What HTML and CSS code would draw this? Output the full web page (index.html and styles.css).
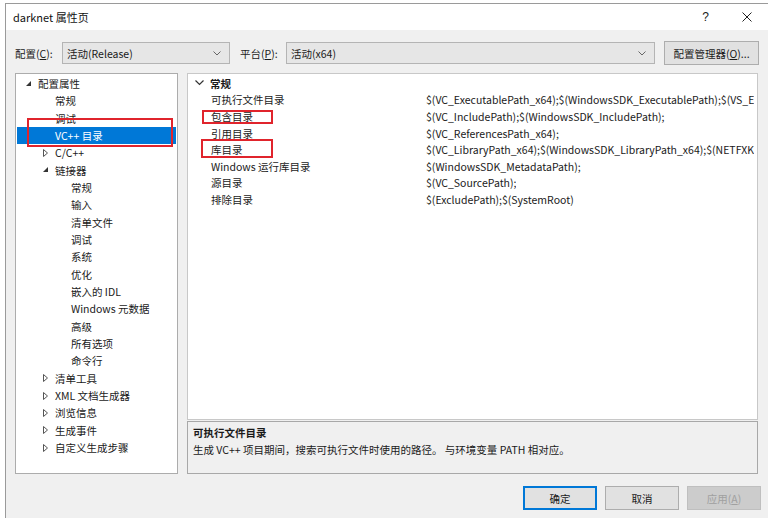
FILE: index.html
```html
<!DOCTYPE HTML>
<html>

<head>
    <title>darknet 属性页</title>
    <meta name="viewport" content="width=device-width, initial-scale=1">
    <link rel="stylesheet" href="styles.css">
</head>

<body>
    <div class="dialog">
        <div class="titlebar">
            <span class="title">darknet 属性页</span>
            <span class="help">?</span>
            <svg class="close" width="10" height="10" viewBox="0 0 10 10">
                <path d="M0.5 0.5 L9.5 9.5 M9.5 0.5 L0.5 9.5" stroke="#222" stroke-width="1" fill="none" />
            </svg>
        </div>

        <div class="toolbar">
            <span class="lbl">配置(<u>C</u>):</span>
            <div class="combo combo-config">
                <span>活动(Release)</span>
                <svg width="8" height="5" viewBox="0 0 8 5"><path d="M0.5 0.5 L4 4 L7.5 0.5" stroke="#666" fill="none" /></svg>
            </div>
            <span class="lbl lbl-platform">平台(<u>P</u>):</span>
            <div class="combo combo-platform">
                <span>活动(x64)</span>
                <svg width="8" height="5" viewBox="0 0 8 5"><path d="M0.5 0.5 L4 4 L7.5 0.5" stroke="#666" fill="none" /></svg>
            </div>
            <button class="btn btn-manager">配置管理器(<u>O</u>)...</button>
        </div>

        <div class="main">
            <div class="tree">
                <div class="node l0"><span class="tog"><svg width="6" height="6" viewBox="0 0 6 6"><path d="M5 0 L5 5 L0 5 Z" fill="#333" /></svg></span>配置属性</div>
                <div class="node l1"><span class="tog"></span>常规</div>
                <div class="node l1"><span class="tog"></span>调试</div>
                <div class="node l1 selected"><span class="tog"></span>VC++ 目录</div>
                <div class="node l1"><span class="tog"><svg width="6" height="8" viewBox="0 0 6 8"><path d="M0.5 0.5 L4.5 4 L0.5 7.5 Z" fill="none" stroke="#555" /></svg></span>C/C++</div>
                <div class="node l1"><span class="tog"><svg width="6" height="6" viewBox="0 0 6 6"><path d="M5 0 L5 5 L0 5 Z" fill="#333" /></svg></span>链接器</div>
                <div class="node l2"><span class="tog"></span>常规</div>
                <div class="node l2"><span class="tog"></span>输入</div>
                <div class="node l2"><span class="tog"></span>清单文件</div>
                <div class="node l2"><span class="tog"></span>调试</div>
                <div class="node l2"><span class="tog"></span>系统</div>
                <div class="node l2"><span class="tog"></span>优化</div>
                <div class="node l2"><span class="tog"></span>嵌入的 IDL</div>
                <div class="node l2"><span class="tog"></span>Windows 元数据</div>
                <div class="node l2"><span class="tog"></span>高级</div>
                <div class="node l2"><span class="tog"></span>所有选项</div>
                <div class="node l2"><span class="tog"></span>命令行</div>
                <div class="node l1"><span class="tog"><svg width="6" height="8" viewBox="0 0 6 8"><path d="M0.5 0.5 L4.5 4 L0.5 7.5 Z" fill="none" stroke="#555" /></svg></span>清单工具</div>
                <div class="node l1"><span class="tog"><svg width="6" height="8" viewBox="0 0 6 8"><path d="M0.5 0.5 L4.5 4 L0.5 7.5 Z" fill="none" stroke="#555" /></svg></span>XML 文档生成器</div>
                <div class="node l1"><span class="tog"><svg width="6" height="8" viewBox="0 0 6 8"><path d="M0.5 0.5 L4.5 4 L0.5 7.5 Z" fill="none" stroke="#555" /></svg></span>浏览信息</div>
                <div class="node l1"><span class="tog"><svg width="6" height="8" viewBox="0 0 6 8"><path d="M0.5 0.5 L4.5 4 L0.5 7.5 Z" fill="none" stroke="#555" /></svg></span>生成事件</div>
                <div class="node l1"><span class="tog"><svg width="6" height="8" viewBox="0 0 6 8"><path d="M0.5 0.5 L4.5 4 L0.5 7.5 Z" fill="none" stroke="#555" /></svg></span>自定义生成步骤</div>
                <div class="mark mark-tree"></div>
            </div>

            <div class="right">
                <div class="grid">
                    <div class="row head">
                        <span class="chev"><svg width="9" height="6" viewBox="0 0 9 6"><path d="M0.5 0.5 L4.5 4.5 L8.5 0.5" stroke="#333" stroke-width="1.2" fill="none" /></svg></span>
                        <span class="name">常规</span>
                    </div>
                    <div class="row"><span class="name">可执行文件目录</span><span class="val">$(VC_ExecutablePath_x64);$(WindowsSDK_ExecutablePath);$(VS_E</span></div>
                    <div class="row"><span class="name">包含目录</span><span class="val">$(VC_IncludePath);$(WindowsSDK_IncludePath);</span></div>
                    <div class="row"><span class="name">引用目录</span><span class="val">$(VC_ReferencesPath_x64);</span></div>
                    <div class="row"><span class="name">库目录</span><span class="val">$(VC_LibraryPath_x64);$(WindowsSDK_LibraryPath_x64);$(NETFXK</span></div>
                    <div class="row"><span class="name">Windows 运行库目录</span><span class="val">$(WindowsSDK_MetadataPath);</span></div>
                    <div class="row"><span class="name">源目录</span><span class="val">$(VC_SourcePath);</span></div>
                    <div class="row"><span class="name">排除目录</span><span class="val">$(ExcludePath);$(SystemRoot)</span></div>
                    <div class="mark mark-inc"></div>
                    <div class="mark mark-lib"></div>
                </div>
                <div class="desc">
                    <div class="desc-title">可执行文件目录</div>
                    <div class="desc-text">生成 VC++ 项目期间，搜索可执行文件时使用的路径。 与环境变量 PATH 相对应。</div>
                </div>
            </div>
        </div>

        <div class="actions">
            <button class="btn btn-ok">确定</button>
            <button class="btn">取消</button>
            <button class="btn btn-disabled">应用(<u>A</u>)</button>
        </div>
    </div>
</body>

</html>
```

FILE: styles.css
```css
html {
    font-family: "Noto Sans CJK SC", "Noto Sans", sans-serif;
    font-size: 10.5px;
    color: #1a1a1a;
}

body {
    margin: 0;
    background-color: #fff;
    overflow: hidden;
}

u {
    text-decoration: underline;
}

.dialog {
    margin: 3px 0 0 5px;
    height: 515px;
    border-top: 1px solid #9a9a9a;
    border-left: 1px solid #9a9a9a;
    background-color: #f0f0f0;
}

.titlebar {
    display: flex;
    align-items: center;
    height: 26px;
    padding-left: 7px;
    background-color: #fff;
}

.title {
    flex: 1;
    font-size: 11px;
    color: #111;
}

.help {
    font-family: "Liberation Sans", sans-serif;
    font-size: 12px;
    margin-right: 33px;
}

.close {
    margin-right: 16px;
}

.toolbar {
    display: flex;
    align-items: center;
    height: 24px;
    margin-top: 11px;
    padding-left: 9px;
}

.lbl {
    width: 47px;
}

.lbl-platform {
    margin-left: 10px;
    width: 46px;
}

.combo {
    display: flex;
    align-items: center;
    justify-content: space-between;
    box-sizing: border-box;
    height: 22px;
    padding: 0 8px 0 4px;
    background-color: #e6e6e6;
    border: 1px solid #b4b4b4;
}

.combo-config {
    width: 168px;
}

.combo-platform {
    width: 369px;
}

.btn {
    box-sizing: border-box;
    width: 74px;
    height: 24px;
    font-family: inherit;
    font-size: 10.5px;
    color: #1a1a1a;
    background-color: #e1e1e1;
    border: 1px solid #adadad;
    padding: 0;
}

.btn-manager {
    width: 95px;
    margin-left: 9px;
}

.main {
    display: flex;
    margin-top: 8px;
    padding-left: 9px;
    height: 401px;
}

.tree {
    position: relative;
    box-sizing: border-box;
    width: 163px;
    padding-top: 1px;
    background-color: #fff;
    border: 1px solid #acacac;
}

.node {
    display: flex;
    align-items: center;
    height: 17.33px;
    white-space: nowrap;
}

.tog {
    display: flex;
    align-items: center;
    width: 12px;
}

.l0 {
    padding-left: 10px;
}

.l1 {
    padding-left: 27px;
}

.l2 {
    padding-left: 43px;
}

.selected {
    margin: 0 1px;
    padding-left: 26px;
    background-color: #0078d7;
    color: #fff;
}

.mark {
    position: absolute;
    box-sizing: border-box;
    border: 2px solid #e0242c;
}

.mark-tree {
    left: 11px;
    top: 44px;
    width: 146px;
    height: 29px;
}

.right {
    display: flex;
    flex-direction: column;
    margin-left: 9px;
    width: 571px;
}

.grid {
    position: relative;
    box-sizing: border-box;
    height: 347px;
    padding-top: 1px;
    background-color: #fff;
    border: 1px solid #c8c8c8;
    overflow: hidden;
}

.row {
    display: flex;
    align-items: center;
    height: 16.6px;
    white-space: nowrap;
}

.name {
    width: 215px;
    padding-left: 23px;
    flex-shrink: 0;
}

.val {
    overflow: hidden;
}

.head .chev {
    display: flex;
    width: 22px;
    padding-left: 7px;
    box-sizing: border-box;
}

.head .name {
    padding-left: 0;
    font-weight: bold;
}

.mark-inc {
    left: 14px;
    top: 36px;
    width: 71px;
    height: 14px;
}

.mark-lib {
    left: 13px;
    top: 65px;
    width: 72px;
    height: 19px;
}

.desc {
    box-sizing: border-box;
    height: 53px;
    margin-top: 1px;
    padding: 2px 5px;
    border: 1px solid #a8a8a8;
    background-color: #f0f0f0;
}

.desc-title {
    font-weight: bold;
    line-height: 17px;
}

.desc-text {
    line-height: 17px;
}

.actions {
    display: flex;
    gap: 8px;
    margin-top: 12px;
    padding-left: 517px;
}

.btn-ok {
    border: 2px solid #0078d7;
}

.btn-disabled {
    color: #a0a0a0;
    background-color: #cccccc;
    border-color: #bfbfbf;
}
```
